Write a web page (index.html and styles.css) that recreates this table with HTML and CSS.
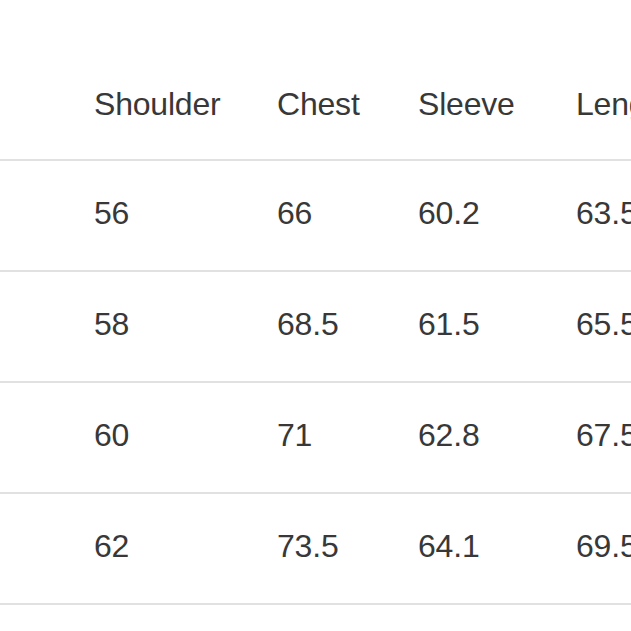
FILE: index.html
```html
<!DOCTYPE html>
<html>
<head>
<meta charset="utf-8">
<link rel="stylesheet" href="styles.css">
</head>
<body>
<div class="table">
  <div class="row head">
    <div class="cell"></div>
    <div class="cell">Shoulder</div>
    <div class="cell">Chest</div>
    <div class="cell">Sleeve</div>
    <div class="cell">Length</div>
  </div>
  <div class="row">
    <div class="cell"></div>
    <div class="cell">56</div>
    <div class="cell">66</div>
    <div class="cell">60.2</div>
    <div class="cell">63.5</div>
  </div>
  <div class="row">
    <div class="cell"></div>
    <div class="cell">58</div>
    <div class="cell">68.5</div>
    <div class="cell">61.5</div>
    <div class="cell">65.5</div>
  </div>
  <div class="row">
    <div class="cell"></div>
    <div class="cell">60</div>
    <div class="cell">71</div>
    <div class="cell">62.8</div>
    <div class="cell">67.5</div>
  </div>
  <div class="row">
    <div class="cell"></div>
    <div class="cell">62</div>
    <div class="cell">73.5</div>
    <div class="cell">64.1</div>
    <div class="cell">69.5</div>
  </div>
</div>
</body>
</html>
```
FILE: styles.css
```css
html, body {
  margin: 0;
  padding: 0;
  background: #ffffff;
  overflow: hidden;
}
body {
  width: 631px;
  height: 631px;
}
.table {
  width: 631px;
  font-family: "Liberation Sans", Arial, sans-serif;
  font-size: 32px;
  line-height: 32px;
  color: #383838;
  letter-spacing: -0.2px;
}
.row {
  display: grid;
  grid-template-columns: 94px 183px 141px 158px 200px;
  box-sizing: border-box;
  height: 111px;
  padding-top: 36px;
  border-bottom: 2px solid #e1e1e1;
  white-space: nowrap;
}
.row.head {
  height: 161px;
  padding-top: 88px;
}
.cell {
  white-space: nowrap;
}
```
